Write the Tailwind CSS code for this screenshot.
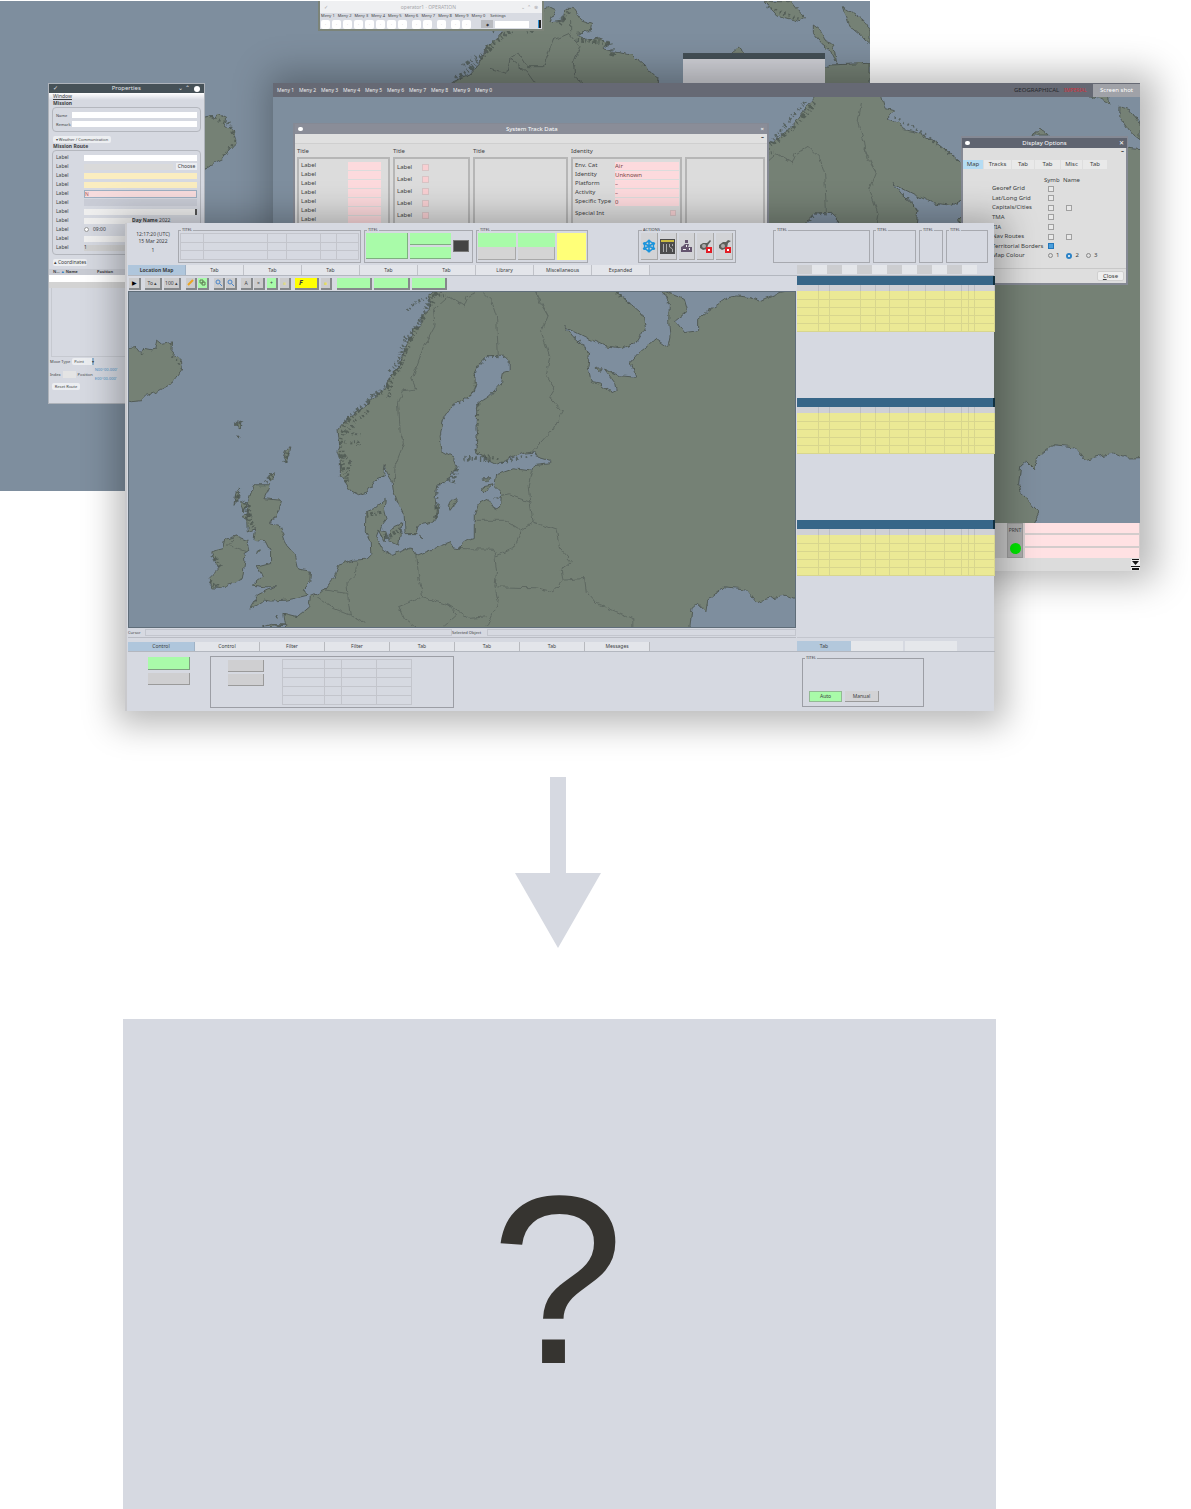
<!DOCTYPE html>
<html lang="en">
<head>
<meta charset="utf-8">
<title>Workstation windows</title>
<script src="https://cdn.jsdelivr.net/npm/@tailwindcss/browser@4"></script>
</head>
<body class="overflow-x-hidden bg-white font-['Noto_Sans',sans-serif] text-[5px] leading-[7px] whitespace-nowrap text-[#3c3e42]">

<!-- Shared chart geometry -->
<svg class="absolute size-0" aria-hidden="true">
  <defs>
    <filter id="coast" x="-600" y="-200" width="2800" height="1400" filterUnits="userSpaceOnUse">
      <feTurbulence type="fractalNoise" baseFrequency="0.05" numOctaves="2" seed="4"/>
      <feDisplacementMap in="SourceGraphic" scale="16" xChannelSelector="R" yChannelSelector="G"/>
    </filter>
    <g id="chart">
      <rect x="-600" y="-200" width="2800" height="1400" fill="#7e8e9e"/>
      <g filter="url(#coast)" fill="#758175" stroke="#525b57" stroke-width="3" stroke-linejoin="round">
        <path d="M1101-138L1070-100 1040-60 1000-20 950 10 925 30 935 60 905 90 905 120 880 130 865 170 850 190 840 240 815 265 800 300 775 325 745 350 735 365 700 385 670 410 650 435 655 480 650 500 660 530 660 570 675 590 690 615 715 628 740 620 770 580 790 570 795 540 800 560 815 585 820 620 835 660 852 690 855 745 888 745 893 720 940 710 950 680 945 640 950 600 990 575 1010 540 1000 515 965 495 960 450 970 400 980 385 1000 355 1055 328 1070 290 1065 260 1080 230 1100 210 1150 208 1168 225 1168 255 1150 260 1145 290 1110 330 1075 355 1070 380 1068 430 1073 470 1070 500 1110 525 1130 535 1170 520 1210 503 1245 500 1255 515 1290 525 1290 535 1245 540 1238 557 1180 550 1130 568 1125 600 1145 620 1142 665 1125 672 1105 640 1075 655 1063 690 1063 760 1030 770 1020 790 1000 788 990 772 930 795 890 812 870 785 840 800 810 808 785 790 770 760 785 720 800 700 792 670 795 642 765 668 737 680 735 740 750 770 752 810 740 822 700 825 655 840 640 880 615 915 570 935 565 965 530 995 490 985 495 1020 490 1220H2250V15L2076 20 2041 16 2030 10 1980 20 1920 45 1895 35 1855 30 1825 35 1760 80 1735 100 1735 135 1695 140 1668 105 1705 75 1695 40 1630 14 1650 50 1648 110 1652 150 1645 185 1610 160 1560 200 1535 230 1550 275 1500 270 1455 250 1485 290 1490 315 1475 322 1440 295 1415 290 1405 240 1410 200 1360 155 1335 122 1400 155 1450 178 1510 188 1555 165 1578 125 1570 85 1536 56 1476 6 1426-24 1401-34 1366-40 1356-60 1316-74 1340-96 1311-104 1290-180 1150-180Z"/>
        <path d="M-20 190L28 185 45 182 60 200 75 188 95 192 105 190 110 163 125 175 152 168 150 190 165 210 182 222 184 250 165 275 150 295 105 320 75 330 60 345 28 348-20 340Z"/>
        <path d="M400 598L450 598 430 640 483 645 475 675 450 715 480 725 498 780 525 810 535 852 570 858 568 890 545 915 563 930 500 945 450 948 430 945 410 960 385 970 410 930 440 915 465 905 430 905 395 900 425 875 412 845 450 835 450 800 435 770 400 765 405 730 380 740 378 700 385 640Z"/>
        <path d="M378 765L345 752 315 762 308 790 270 800 285 830 295 850 265 880 270 908 300 910 365 880 373 830 370 805 385 795Z"/>
        <path d="M360 605L350 640 340 660 345 625ZM360 645L380 655 370 680ZM365 690L385 685 375 705ZM445 570L465 565 450 592ZM495 495L508 487 497 533 488 515ZM340 418L365 407 358 430ZM352 447L358 455ZM775 735L798 740 795 770ZM810 730L845 715 835 780 805 765ZM898 750L912 762ZM1010 635L1015 640 990 675 985 660ZM950 660L958 655 945 705ZM1085 605L1120 598 1095 620ZM1090 580L1110 580 1100 590ZM410 795L420 790 408 805ZM1430 248L1445 246 1438 258ZM425 1026L450 1018 500 1020ZM465 990L470 1000ZM1751-24L1776-44 1801-24ZM1886-150L1980-150 1986-115 1950-135ZM2016-109L2045-100 2076-60V-10L2050-30 2015-80Z"/>
        <path fill="#7e8e9e" d="M1712 1026L1718 970 1735 955 1760 980 1765 945 1815 905 1880 912 1910 950 1950 940 2000 930 2040 945 2250 940V1200H1730L1775 1110 1720 1050Z"/>
        <g fill="none" stroke-width="3" opacity=".65">
          <path d="M985 30L940 70 945 120 910 185 890 240 875 280 888 310 850 315 835 350 840 440 852 470 825 540 822 590M1080 10L1115 45 1130 90 1135 205M985 30L1030 60 1040 35 1080 10M1250 20L1285 90 1265 140 1290 210 1280 270 1305 310 1290 335 1328 378 1300 430 1235 500M1285 90L1255 40 1250 0 1230-60 1240-120"/>
          <path d="M1235 560L1225 600 1230 650 1165 628 1120 640M1230 650L1240 710 1205 735 1155 705 1060 705M1240 710L1310 735 1320 790 1355 830 1325 855 1330 885 1395 880 1400 920 1430 955 1540 1000 1540 1030M1205 735L1180 790 1130 812 1120 792 1020 790M1125 810L1130 860 1125 905 1250 908 1300 920 1330 885M1125 905L1135 950 1100 1026M890 812L895 870 908 935 985 960 1050 1000 1100 995M908 935L835 965 850 1000 885 1026M985 960L1010 990 970 1026M710 830L705 870 680 895 685 960 690 990 735 1015M615 915L680 925M590 935L640 970 690 990M345 752L320 780 378 800"/>
        </g>
        <g fill="none" stroke="#4e5853" opacity=".8">
          <path stroke-width="14" stroke-dasharray="4 7 10 6 3 9" d="M1101-120L1040-50 950 20 905 100 865 170 840 240 800 300 740 350 675 410 660 470 665 530 680 590"/>
          <path stroke-width="9" stroke-dasharray="6 5 3 8" d="M1070-125L1010-50 930 40 895 110 855 160 830 235 805 260M860 72L885 50 925 32 980 25M745 375L700 410 680 440 720 450M665 470L710 468 715 480M670 510L690 530 680 580M750 330L790 320M815 300L800 340"/>
          <path stroke-width="14" stroke-dasharray="4 7 8 6" d="M378 650L385 700 400 730M435 590L455 570M495 530L503 495M345 418L365 410M352 620L345 655M265 890L290 905M275 810L300 850M1000 590L1010 540M1030 518L1110 520M740 690L790 680M785 760L845 735"/>
          <path stroke-width="7" stroke-dasharray="5 10" d="M1000 360L1060 325 1070 250 1100 212 1165 215M1075 355L1070 500 1150 530 1250 505M1365 155L1410 200M950 700L952 600 1000 575M1340-80L1430-25 1530 50M184 250L150 200M70 190L60 215"/>
        </g>
      </g>
    </g>
  </defs>
</svg>

<main>
<section class="relative h-[777px]" aria-label="Workstation desktops">

  <!-- Rear desktop -->
  <div class="absolute left-0 top-px h-[490px] w-[870px] overflow-hidden bg-[#7e8e9e]">
    <svg class="size-full" viewBox="-930 3 2610 1470" aria-hidden="true">
      <g filter="url(#coast)" fill="#758175" stroke="#525b57" stroke-width="3">
        <path d="M-330 350L-300 345-290 360-275 343-250 355-255 375-228 395-222 430-245 455-260 475-290 490-315 510-360 515V350Z"/>
        <path d="M430 245L480 225 510 190 530 140 560 115 580 90 620 75 640 55 665 75 690 35 715 20 735 30 720 65 760 60 765 25 790 25 815 60 845 70 840 95 800 100 830 120 860 115 900 130 875 145 910 155 965 165 1010 205 1045 240 1045 500H400Z"/>
        <path d="M1265 160L1285 143 1305 160ZM1365 5H1445L1480 50 1470 65 1400 45ZM1510 75L1530 90 1545 120 1570 130 1580 190 1560 150 1535 130 1510 100ZM1600 20L1660 60 1680 90V130L1620 80ZM1440 205L1480 205 1510 180 1530 220 1560 195 1680 190V400H1440Z"/>
        <g fill="none" opacity=".8"><path d="M540 205L590 220 600 175 625 160 650 200 700 200 730 120 775 100 810 140 790 190 795 230 820 250M600 175L650 215 675 250M782 60V100"/></g>
        <g fill="none" stroke="#4e5853" opacity=".8"><path stroke-width="14" stroke-dasharray="4 7 10 6 3 9" d="M440 235L490 200 540 140 590 100 650 65 700 35M460 195L500 170M550 90L600 70M650 100L700 40M750 70L780 30M800 120L900 130 910 170"/><path stroke-width="8" stroke-dasharray="5 9" d="M-300 350L-245 370-225 420-260 470M1370 20L1475 60"/></g>
      </g>
    </svg>

    <div class="absolute left-[318px] top-0 flex h-[30px] w-[226px] flex-col border-2 border-t-0 border-[#7c8479] bg-[#d8dbe2] text-[4px]">
      <div class="flex h-[12px] items-center justify-between bg-[#eff0f2] px-1 text-[5px] text-[#a5a6aa]"><span>✓</span><span class="pl-2">operator1 · OPERATION</span><span>⌄&nbsp; ⌃&nbsp; ⊗</span></div>
      <nav id="smallMenu" class="flex h-[6px] items-center gap-[3px] px-px leading-[6px]"></nav>
      <div id="smallTools" class="flex flex-1 items-center gap-[2px] px-px"></div>
    </div>
    <div class="absolute left-[683px] top-[52px] h-[60px] w-[142px] border-t-6 border-[#434f55] bg-[#cfd0d6]"></div>

    <!-- Properties -->
    <form class="absolute left-[48px] top-[82px] flex h-[321px] w-[157px] flex-col border border-[#aeb3ba] bg-[#d6d9e1]">
      <header class="flex h-[9px] shrink-0 items-center justify-between bg-[#465157] px-1 text-[6px] text-[#e1e4e7]"><span>✓</span><span class="pl-4">Properties</span><span class="flex items-center gap-1">⌄ ⌃ <i class="size-[6px] rounded-full bg-white"></i></span></header>
      <div class="h-[7px] shrink-0 bg-gradient-to-b from-white to-[#d6d9e1] pl-1 underline">Window</div>
      <b class="h-[7px] shrink-0 pl-1">Mission</b>
      <div class="mx-[3px] flex h-[25px] shrink-0 flex-col justify-center gap-[2px] rounded-sm border border-[#b4b7be] px-[3px]">
        <label class="flex h-[7px] items-center"><span class="w-[16px] text-[4px]">Name</span><input class="h-[6px] min-w-0 flex-1 bg-white"></label>
        <label class="flex h-[7px] items-center"><span class="w-[16px] text-[4px]">Remark</span><input class="h-[6px] min-w-0 flex-1 bg-white"></label>
      </div>
      <button type="button" class="mt-[4px] ml-[4px] h-[7px] w-[58px] shrink-0 rounded-xs bg-[#eceef1] text-[4px] leading-[7px]">▾ Weather / Communication</button>
      <b class="h-[7px] shrink-0 pl-1">Mission Route</b>
      <div class="mx-[3px] flex h-[105px] shrink-0 flex-col justify-center gap-[2px] rounded-sm border border-[#b4b7be] px-[3px]">
        <label class="flex h-[7px] items-center"><span class="w-[28px]">Label</span><input class="h-[6px] min-w-0 flex-1 bg-white"></label>
        <div class="flex h-[7px] items-center"><label for="choice" class="w-[28px]">Label</label><input id="choice" class="h-[6px] min-w-0 flex-1 bg-[#dadada]"><button type="button" class="ml-[3px] h-[7px] w-[21px] bg-[#ebedf1]">Choose</button></div>
        <label class="flex h-[7px] items-center"><span class="w-[28px]">Label</span><input class="h-[6px] min-w-0 flex-1 bg-[#faedc0]"></label>
        <label class="flex h-[7px] items-center"><span class="w-[28px]">Label</span><input class="h-[6px] min-w-0 flex-1 bg-[#faedc0]"></label>
        <label class="flex h-[7px] items-center"><span class="w-[28px]">Label</span><input value="N" class="h-[8px] min-w-0 flex-1 border border-[#9dafc1] bg-[#f7dcdd] text-[#a55]"></label>
        <label class="flex h-[7px] items-center"><span class="w-[28px]">Label</span><select class="h-[7px] min-w-0 flex-1 appearance-none bg-[#c9ccd6]"><option></option></select></label>
        <label class="flex h-[7px] items-center"><span class="w-[28px]">Label</span><input class="h-[6px] min-w-0 flex-1 border-r-2 border-[#555] bg-[#efefef]"></label>
        <div class="flex h-[7px] items-center"><label for="depth" class="w-[28px]">Label</label><input id="depth" class="h-[6px] w-[48px] bg-[#efefef]"><b class="flex-1 text-[5px]">Day Name <span class="font-normal">2022</span></b></div>
        <label class="flex h-[7px] items-center"><span class="w-[28px]">Label</span><input type="checkbox" class="mr-1 size-[5px] appearance-none rounded-full border border-[#999] bg-white"><span>09:00</span></label>
        <label class="flex h-[7px] items-center"><span class="w-[28px]">Label</span><input class="h-[6px] min-w-0 flex-1 bg-[#efefef]"></label>
        <label class="flex h-[7px] items-center"><span class="w-[28px]">Label</span><input value="1" class="h-[6px] min-w-0 flex-1 bg-[#d0d0d0]"></label>
      </div>
      <button type="button" class="mt-[4px] ml-[4px] h-[7px] w-[34px] shrink-0 rounded-xs bg-[#eceef1] leading-[7px]">▴ Coordinates</button>
      <div class="mt-[3px] flex h-[6px] shrink-0 bg-[#c8cbd3] px-1 leading-[6px]"><b class="w-[44px] text-[4px]">N… <span class="text-[#2f7fc0]">▲</span> Name</b><b class="text-[4px]">Position</b></div>
      <div class="h-[7px] shrink-0 bg-white"></div>
      <div class="h-[6px] shrink-0 bg-[#d3d3d3]"></div>
      <div class="mx-[2px] flex-1 border-x border-b border-[#c6c9d0]"></div>
      <div class="flex h-[8px] shrink-0 items-center gap-[2px] pl-px text-[4px]">Move Type <button type="button" class="flex h-[7px] w-[22px] items-center justify-between rounded-xs bg-[#eceef1] pl-[2px]">Point <span class="bg-[#8fb1cc]">▾</span></button></div>
      <div class="flex h-[18px] shrink-0 items-center gap-[2px] pl-px text-[4px]"><label for="idx">Index</label><input id="idx" class="h-[7px] w-[13px] bg-[#e4e4e4]">Position<span class="flex flex-col gap-[2px] text-[#4d93c8]"><a href="#">N00°00.000'</a><a href="#">E00°00.000'</a></span></div>
      <button type="button" class="mb-[13px] ml-[3px] h-[7px] w-[28px] shrink-0 rounded-xs bg-[#eceef1] text-[4px] leading-[7px]">Reset Route</button>
    </form>
  </div>

  <!-- Middle desktop -->
  <div class="absolute left-[273px] top-[83px] flex h-[488px] w-[867px] flex-col bg-[#dcdcdc] shadow-[6px_0px_34px_10px_rgba(0,0,0,0.28)]">
    <header class="flex h-[14px] shrink-0 items-center bg-[#666974] pl-1 text-[6px] text-[#eeeeee]">
      <nav id="midMenu" class="flex flex-1"></nav>
      <span class="w-[50px] text-[6px] text-[#26282d]">GEOGRAPHICAL</span><span class="w-[29px] text-[5px] text-[#d22f3b]">IMPERIAL</span>
      <button class="h-[13px] w-[47px] bg-[#a0a2a8] text-[6px] text-white">Screen shot</button>
    </header>
    <div class="relative h-[426px] shrink-0 overflow-hidden">
      <svg class="size-full" viewBox="-525 -138 2601 1278" aria-hidden="true"><use href="#chart"/></svg>

      <div class="absolute left-[20px] top-[26px] w-[476px] border-2 border-t-1 border-[#858994] bg-[#dcdcdc] text-[6px]">
        <header class="flex h-[10px] items-center justify-between bg-[#8a8d98] px-[3px] text-[6px] text-white"><i class="h-[4px] w-[5px] rounded-xs bg-white"></i><span>System Track Data</span><span>×</span></header>
        <div class="h-[10px] border-b border-[#cfcfcf] bg-[#e0e0e0] pr-[3px] text-right font-bold text-black">–</div>
        <div class="flex gap-[3px] px-[2px] pt-[4px]">
          <div class="w-[93px] shrink-0"><div class="h-[9px]">Title</div><div id="trackA" class="h-[80px] border-2 border-[#b6b6b6] pt-[2px] pr-[7px] pl-[2px]"></div></div>
          <div class="w-[77px] shrink-0"><div class="h-[9px]">Title</div><div id="trackB" class="h-[80px] border-2 border-[#b6b6b6] pt-[2px] pl-[2px]"></div></div>
          <div class="w-[95px] shrink-0"><div class="h-[9px]">Title</div><div class="h-[80px] border-2 border-[#b6b6b6]"></div></div>
          <div class="w-[111px] shrink-0"><div class="h-[9px]">Identity</div><div id="trackC" class="h-[80px] border-2 border-[#b6b6b6] pt-[2px] pr-px pl-[2px]"></div></div>
          <div class="flex-1 pt-[9px]"><div class="h-[80px] border-2 border-[#b6b6b6]"></div></div>
        </div>
      </div>

      <form class="absolute left-[688px] top-[39px] flex h-[149px] w-[167px] flex-col border-2 border-[#858994] bg-[#dedede] text-[6px]">
        <header class="-mx-px flex h-[10px] shrink-0 items-center justify-between bg-[#5f6470] px-[3px] text-[6px] text-white"><i class="h-[4px] w-[5px] rounded-xs bg-white"></i><span>Display Options</span><span>✕</span></header>
        <div class="h-[12px] shrink-0 pr-[2px] text-right font-bold text-black">–</div>
        <nav id="optTabs" class="flex h-[9px] shrink-0 gap-px"></nav>
        <div class="grid grid-cols-[50px_17px_20px] gap-x-[2px] pt-[7px] pl-[29px] text-[6px] leading-[8px]"><span></span><span>Symb</span><span>Name</span></div>
        <div id="optRows" class="flex h-[67px] shrink-0 flex-col justify-between pl-[29px]"></div>
        <div class="flex h-[9px] items-center gap-[5px] pl-[29px] text-[6px]"><span class="w-[51px]">Map Colour</span>
          <label class="flex items-center gap-[3px]"><input type="radio" name="mc" class="size-[5px] appearance-none rounded-full border border-[#888]">1</label>
          <label class="flex items-center gap-[3px] pl-[2px]"><input type="radio" name="mc" checked class="size-[6px] appearance-none rounded-full border-2 border-[#2b82c6] bg-white">2</label>
          <label class="flex items-center gap-[3px] pl-[2px]"><input type="radio" name="mc" class="size-[5px] appearance-none rounded-full border border-[#888]">3</label></div>
        <div class="mt-auto flex h-[15px] justify-end border-t border-[#c8c8c8] pt-[2px] pr-[2px]"><button type="button" class="h-[10px] w-[27px] rounded-xs border border-[#d0d0d0] bg-[#eeeeee]"><u>C</u>lose</button></div>
      </form>
    </div>
    <div class="flex h-[35px] shrink-0 justify-end bg-[#c6c6c6]">
      <div class="flex w-[16px] flex-col items-center justify-between border border-[#9b9b9b] bg-[#ababab] py-[3px] text-[5px]">PRNT<i class="size-[11px] rounded-full bg-[#00e400]"></i></div>
      <div class="flex w-[117px] flex-col gap-[2px] bg-[#d3cccc] pr-px pl-[2px]"><i class="flex-1 bg-[#ffe1e3]"></i><i class="flex-1 bg-[#ffe1e3]"></i><i class="flex-1 bg-[#ffe1e3]"></i></div>
    </div>
    <div class="flex flex-1 items-center justify-end"><svg class="h-[11px] w-[9px]" viewBox="0 0 9 11"><path fill="#eee" d="M0 0h9v11H0z"/><path fill="#151515" d="M1 0h7v1H1zM1 2h7L4.500 6zM0 7h9v1H0zM1 9h7v2H1z"/></svg></div>
  </div>

  <!-- Front desktop -->
  <div class="absolute left-[125px] top-[223px] flex h-[488px] w-[869px] flex-col border-l-2 border-[#c9c9cc] bg-[#d6d9e1] pl-px shadow-[1px_4px_32px_10px_rgba(0,0,0,0.28)]">
    <header class="flex h-[42px] shrink-0 pt-[4px]">
      <div class="w-[50px] pt-[4px] text-center">12:17:20 (UTC)<br>15 Mar 2022<br><span class="block pt-[2px]">1</span></div>
      <fieldset class="h-[36px] w-[183px] border border-[#a7a9af] px-px"><legend class="ml-px h-[6px] px-px text-[4px] leading-[6px]">TITEL</legend>
        <table class="h-[27px] w-full table-fixed border-collapse"><colgroup><col class="w-[23px]"><col class="w-[64px]"><col class="w-[19px]"><col class="w-[34px]"><col class="w-[16px]"><col></colgroup><tbody id="headGrid"></tbody></table></fieldset>
      <fieldset class="ml-[3px] h-[36px] w-[109px] border border-[#a7a9af] px-px"><legend class="ml-px h-[6px] px-px text-[4px] leading-[6px]">TITEL</legend>
        <div class="flex h-[26px] items-center gap-[2px]"><button class="h-full w-[42px] border-r border-b border-[#7fae80] bg-[#a9fba9]" aria-label="Mode"></button><div class="flex h-full w-[41px] flex-col gap-[2px]"><button class="flex-1 border-b border-[#7fae80] bg-[#a9fba9]" aria-label="A"></button><button class="flex-1 border-b border-[#7fae80] bg-[#a9fba9]" aria-label="B"></button></div><i class="h-[12px] w-[16px] border border-[#777] bg-[#444]"></i></div></fieldset>
      <fieldset class="ml-[3px] h-[36px] w-[112px] border border-[#a7a9af] px-px"><legend class="ml-px h-[6px] px-px text-[4px] leading-[6px]">TITEL</legend>
        <div class="flex h-[27px] gap-[2px]"><div class="grid w-[77px] grid-cols-2 grid-rows-2 gap-x-[2px]"><button class="bg-[#a9fba9]" aria-label="C"></button><button class="bg-[#a9fba9]" aria-label="D"></button><button class="border-r border-b border-[#a8a8a8] bg-[#d4d4d4]" aria-label="E"></button><button class="border-r border-b border-[#a8a8a8] bg-[#d4d4d4]" aria-label="F"></button></div><button class="flex-1 bg-[#ffff78]" aria-label="G"></button></div></fieldset>
      <fieldset class="ml-[50px] h-[36px] w-[98px] border border-[#a7a9af] px-[2px]"><legend class="ml-px h-[6px] px-px text-[4px] leading-[6px]">ACTIONS</legend>
        <div class="flex h-[27px] gap-[2px]">
          <button aria-label="Network" class="flex flex-1 items-center justify-center border-r border-b border-[#a8a8a8] bg-[#d2d3d6]"><svg class="size-[14px]" viewBox="0 0 14 14" fill="none" stroke="#1a94dc" stroke-width="1.500"><circle cx="7" cy="7" r="4.500"/><path d="M7 3v8M3.500 5l7 4M10.500 5l-7 4"/><g fill="#1a94dc" stroke="none"><circle cx="7" cy="2" r="1.600"/><circle cx="7" cy="12" r="1.600"/><circle cx="2.500" cy="4.500" r="1.600"/><circle cx="11.500" cy="4.500" r="1.600"/><circle cx="2.500" cy="9.500" r="1.600"/><circle cx="11.500" cy="9.500" r="1.600"/></g></svg></button>
          <button aria-label="Keyboard" class="flex flex-1 items-center justify-center border-r border-b border-[#a8a8a8] bg-[#d2d3d6]"><svg class="size-[15px]" viewBox="0 0 15 15"><path fill="#4c4c4c" d="M0 0h15v15H0z"/><path fill="#cbbb40" d="M1 1h13v2H1z"/><path fill="none" stroke="#aaa" d="M3.500 5v8M6.500 5v8M9.500 5v3l3 2v3M12.500 5v2"/></svg></button>
          <button aria-label="Print" class="flex flex-1 items-center justify-center border-r border-b border-[#a8a8a8] bg-[#d2d3d6]"><svg class="size-[13px]" viewBox="0 0 13 13"><path fill="#64556e" d="M5 0h3v3H5zM3 6l2-2h4l-1 3h4v5H1V7z"/><path fill="#eee" d="M3 9h3v1H3zM9 8h1v2H9zM6 5h1v2H6z"/></svg></button>
          <button aria-label="Satellite off" class="flex flex-1 items-center justify-center border-r border-b border-[#a8a8a8] bg-[#d2d3d6]"><svg class="size-[15px]" viewBox="0 0 15 15"><path fill="#5d5f5b" d="M2 6l3-2h4l3-3 1 1-3 4-1 4-4 1-3-2z"/><circle cx="6" cy="7" r="2" fill="#aaa"/><path fill="#e21d25" d="M8 8h6v6H8z"/><path fill="#fff" d="M10 10h2v2h-2z"/></svg></button>
          <button aria-label="Link off" class="flex flex-1 items-center justify-center border-r border-b border-[#a8a8a8] bg-[#d2d3d6]"><svg class="size-[15px]" viewBox="0 0 15 15"><path fill="#5d5f5b" d="M2 6l4-3h3l2-2 3 1-3 2-1 5-5 2-3-2z"/><circle cx="6" cy="7" r="2" fill="#aaa"/><path fill="#e21d25" d="M8 8h6v6H8z"/><path fill="#fff" d="M10 10h2v2h-2z"/></svg></button>
        </div></fieldset>
      <fieldset class="ml-[37px] h-[36px] w-[97px] border border-[#a7a9af]"><legend class="ml-[2px] h-[6px] px-px text-[4px] leading-[6px]">TITEL</legend></fieldset>
      <fieldset class="ml-[3px] h-[36px] w-[43px] border border-[#a7a9af]"><legend class="ml-[2px] h-[6px] px-px text-[4px] leading-[6px]">TITEL</legend></fieldset>
      <fieldset class="ml-[3px] h-[36px] w-[24px] border border-[#a7a9af]"><legend class="ml-[2px] h-[6px] px-px text-[4px] leading-[6px]">TITEL</legend></fieldset>
      <fieldset class="ml-[3px] h-[36px] w-[42px] border border-[#a7a9af]"><legend class="ml-[2px] h-[6px] px-px text-[4px] leading-[6px]">TITEL</legend></fieldset>
    </header>

    <div class="grid min-h-0 flex-1 grid-cols-[669px_1fr]">
      <div class="flex flex-col">
        <nav id="mapTabs" class="flex h-[11px] shrink-0 border-b border-[#b3b7bf]"></nav>
        <div id="tools" class="flex h-[15px] shrink-0 items-center text-[5px]"></div>
        <div class="h-[337px] w-[668px] shrink-0 border border-[#5f6d79]"><svg class="size-full" viewBox="24 18 2004 1008" preserveAspectRatio="none" aria-hidden="true"><use href="#chart"/></svg></div>
        <div class="flex h-[10px] w-[668px] shrink-0 items-center border-b border-[#b9bcc4] text-[4px] leading-[8px]"><label for="cur" class="w-[17px]">Cursor</label><input id="cur" class="h-[7px] w-[307px] border border-[#c3c6ce]"><label for="sel" class="w-[35px]">Selected Object</label><input id="sel" class="h-[7px] min-w-0 flex-1 border border-[#c3c6ce]"></div>
        <nav id="lowTabs" class="mt-[4px] flex h-[10px] shrink-0 border-b border-[#b3b7bf]"></nav>
        <div class="flex flex-1 items-start">
          <div class="flex flex-col gap-[3px] pt-[5px] pl-[20px]"><button class="h-[13px] w-[42px] border-r border-b border-[#7f9f80] bg-[#a9fba9]" aria-label="On"></button><button class="h-[12px] w-[42px] border-r border-b border-[#9a9a9a] bg-[#cfcfd1]" aria-label="Off"></button></div>
          <div class="mt-[4px] ml-[20px] flex h-[52px] w-[244px] gap-[18px] border border-[#9c9ea5] pt-[2px] pl-[17px]">
            <div class="flex flex-col gap-[2px] pt-px"><button class="h-[12px] w-[36px] border-r border-b border-[#9a9a9a] bg-[#cfcfd1]" aria-label="First"></button><button class="h-[12px] w-[36px] border-r border-b border-[#9a9a9a] bg-[#cfcfd1]" aria-label="Second"></button></div>
            <table class="h-[46px] w-[130px] table-fixed border-collapse"><colgroup><col class="w-[42px]"><col class="w-[17px]"><col class="w-[35px]"><col></colgroup><tbody id="lowGrid"></tbody></table>
          </div>
        </div>
      </div>
      <div class="flex flex-col">
        <div class="flex h-[11px] shrink-0 border-b border-[#b3b7bf]"><div id="sideTabs" class="flex h-[9px] w-[180px]"></div></div>
        <div id="lists" class="flex h-[362px] shrink-0 flex-col border-b border-[#c3c6ce]"></div>
        <nav class="mt-[3px] flex h-[11px] shrink-0 border-b border-[#b3b7bf]"><button class="w-[54px] bg-[#b3c8dc]">Tab</button><button class="mr-[2px] w-[52px] bg-[#e5e7eb]" aria-label="Tab 2"></button><button class="w-[52px] bg-[#e5e7eb]" aria-label="Tab 3"></button></nav>
        <fieldset class="mt-[3px] ml-[5px] flex h-[52px] w-[122px] border border-[#9c9ea5]"><legend class="ml-[2px] h-[6px] px-px text-[4px] leading-[6px]">TITEL</legend><div class="flex gap-[3px] pt-[30px] pl-[6px]"><button class="h-[11px] w-[33px] border border-[#93b994] bg-[#a9fba9]">Auto</button><button class="h-[11px] w-[34px] border-r border-b border-[#9a9a9a] bg-[#d3d3d5]">Manual</button></div></fieldset>
      </div>
    </div>
  </div>
</section>

<section class="flex flex-col items-center pr-[195px] pl-[123px]">
  <svg class="mr-[3px] h-[171px] w-[86px]" viewBox="0 0 86 171" aria-hidden="true"><path fill="#d6d9e1" d="M35 0h16v96h35l-43 75L0 96h35z"/></svg>
  <div class="mt-[71px] flex h-[490px] w-full items-center justify-center bg-[#d6d9e1] font-['Liberation_Sans',sans-serif] text-[240px] leading-[240px] text-[#363430]"><span class="pt-[32px] pr-[4px]">?</span></div>
</section>
</main>

<script>
const put = (id, html) => { document.getElementById(id).innerHTML = html; };
const range = n => [...Array(n).keys()];
put('smallMenu', range(9).map(i => `<span>Meny ${i + 1}</span>`).join('') + '<span>Meny 0</span><span class="pl-[2px]">Settings</span>');
put('smallTools', range(13).map(i => `<button class="size-[9px] shrink-0 rounded-xs bg-white text-[#aaa] ${i == 8 || i == 10 || i == 11 ? 'ml-[3px]' : ''}">·</button>`).join('') + '<button class="ml-2 h-[8px] w-[12px] bg-[#b9bbc0]">◆</button><input aria-label="Search" class="h-[7px] w-[34px] bg-white"><i class="ml-auto h-[8px] w-[3px] border-l border-[#2f8fd0] bg-[#222]"></i>');
put('midMenu', range(10).map(i => `<a href="#" class="w-[22px] shrink-0 text-[5px]">Meny ${(i + 1) % 10}</a>`).join(''));
put('trackA', range(8).map(() => `<label class="flex h-[9px] items-center justify-between"><span>Label</span><input class="h-[8px] w-[33px] bg-[#fddadd]"></label>`).join(''));
put('trackB', range(6).map(() => `<label class="flex h-[12px] items-center gap-[10px]"><span>Label</span><input type="checkbox" class="size-[7px] appearance-none border border-[#d8c4c5] bg-[#f8cfd2]"></label>`).join(''));
put('trackC', [['Env. Cat', 'Air'], ['Identity', 'Unknown'], ['Platform', '–'], ['Activity', '–'], ['Specific Type', '0']].map(r => `<label class="flex h-[9px] items-center"><span class="w-[41px]">${r[0]}</span><input value="${r[1]}" class="h-[8px] w-[64px] bg-[#fddadd] text-[#744]"></label>`).join('') + '<label class="flex h-[14px] items-center justify-between pr-[3px]"><span>Special Int</span><input type="checkbox" class="size-[6px] appearance-none border border-[#d8c4c5] bg-[#f5cfd1]"></label>');
put('optTabs', [['Map', 20], ['Tracks', 27], ['Tab', 22], ['Tab', 25], ['Misc', 21], ['Tab', 24]].map((t, i) => `<button type="button" style="width:${t[1]}px" class="${i ? 'bg-[#e9e9e9]' : 'bg-[#b5dcf3]'}">${t[0]}</button>`).join(''));
const box = on => `<input type="checkbox" ${on ? 'checked' : ''} class="size-[6px] appearance-none border border-[#a0a0a0] bg-[#e8e8e8] checked:border-[#2476b8] checked:bg-[#4a9fdd]">`;
put('optRows', ['Georef Grid', 'Lat/Long Grid', 'Capitals/Cities', 'TMA', 'TIA', 'Nav Routes', 'Territorial Borders'].map((t, i) => `<label class="flex h-[9px] items-center"><span class="w-[56px]">${t}</span>${box(i == 6)}${i == 2 || i == 5 ? '<span class="w-[12px]"></span>' + box(false) : ''}</label>`).join(''));
const cells = n => `<td class="border border-[#c3c5cc]"></td>`.repeat(n);
put('headGrid', range(3).map(() => `<tr>${cells(6)}</tr>`).join(''));
put('lowGrid', range(5).map(() => `<tr>${cells(4)}</tr>`).join(''));
put('mapTabs', ['Location Map', 'Tab', 'Tab', 'Tab', 'Tab', 'Tab', 'Library', 'Miscellaneous', 'Expanded'].map((t, i) => `<button class="h-[10px] w-[58px] border-r ${i ? 'border-[#c0c2c8] bg-[#e3e5ea]' : 'border-[#9fb2c6] bg-[#afc6dc] font-bold'}">${t}</button>`).join(''));
put('lowTabs', ['Control', 'Control', 'Filter', 'Filter', 'Tab', 'Tab', 'Tab', 'Messages'].map((t, i) => `<button class="h-[9px] border-r ${i ? 'w-[65px] border-[#b8babf] bg-[#e3e5ea]' : 'w-[67px] border-[#9fb2c6] bg-[#afc6dc]'}">${t}</button>`).join(''));
put('sideTabs', range(12).map(i => `<i class="flex-1 ${i % 2 ? 'bg-[#e4e6ea]' : 'bg-[#cccdd0]'}"></i>`).join(''));
const G = 'bg-[#cccccd]', N = 'bg-[#a9fba9]';
const lens = '<svg class="mx-auto size-[7px]" viewBox="0 0 7 7" fill="none" stroke="#4b86cc"><circle cx="3" cy="3" r="2"/><path d="M4.500 4.500L7 7"/></svg>';
put('tools', [[1,12,'<span class="text-[6px] text-black">▶</span>',G],[4,17,'To ▴',G],[2,17,'100 ▴',G],[5,11,'<svg class="mx-auto size-[7px]" viewBox="0 0 7 7"><path stroke="#eda51f" stroke-width="2" d="M1 6l5-5"/></svg>',G],[1,11,'<svg class="mx-auto size-[7px]" viewBox="0 0 7 7" fill="none" stroke="#5e7f52"><path d="M1 1h3v3H1zM3 3h3v3H3z"/></svg>',N],[5,11,lens,G],[1,11,lens,G],[4,12,'A',G],[1,11,'×',G],[2,11,'+',N],[2,11,'<span class="text-[#dfd98a]">■</span>',G],[4,24,'<span class="block pl-1 text-left text-[7px] italic font-bold">F</span>','bg-[#ffff00]'],[2,11,'<span class="text-[#e6dd5f]">■</span>',G],[5,35,'',N],[2,36,'',N],[2,35,'',N]].map(b => `<button aria-label="Tool" style="margin-left:${b[0]}px;width:${b[1]}px" class="h-[12px] shrink-0 overflow-hidden border-r-2 border-b-2 border-[#85888b] leading-[10px] ${b[3]}">${b[2]}</button>`).join(''));
const widths = [21, 11, 31, 15, 14, 19, 17, 19, 17, 7, 6, 20];
put('lists', range(3).map(() => `<div class="h-[122px] shrink-0"><div class="h-[9px] border-r-2 border-[#12303f] bg-[#376688]"></div><table class="w-full table-fixed border-collapse"><colgroup>${widths.map(w => `<col style="width:${w}px">`).join('')}</colgroup><thead><tr class="h-[6px] bg-[#d0d1d6]">${widths.map(() => '<th class="border-r border-[#bcbec5] p-0"></th>').join('')}</tr></thead><tbody>${range(5).map(() => `<tr class="h-[8px] bg-[#ebe995]">${widths.map(() => '<td class="border-r border-b border-[#d8d68e] p-0"></td>').join('')}</tr>`).join('')}</tbody></table></div>`).join(''));
</script>
</body>
</html>
